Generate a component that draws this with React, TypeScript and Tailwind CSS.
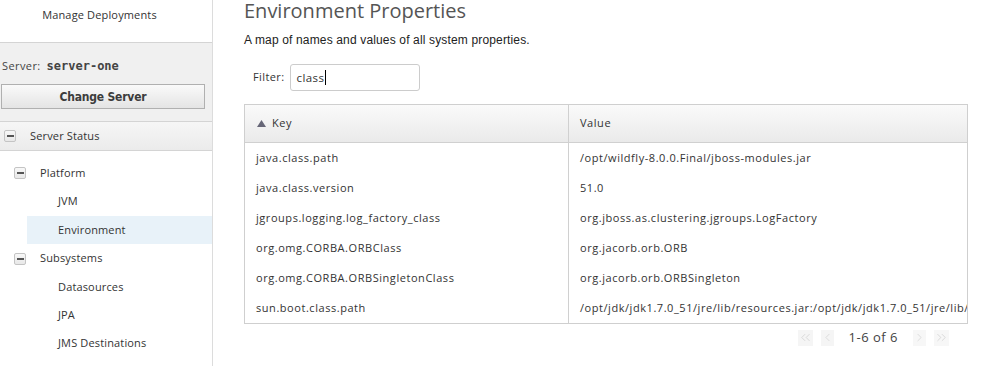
import React from 'react'
import { ChevronLeft, ChevronRight, ChevronsLeft, ChevronsRight } from 'lucide-react'

const rows = [
  ['java.class.path', '/opt/wildfly-8.0.0.Final/jboss-modules.jar'],
  ['java.class.version', '51.0'],
  ['jgroups.logging.log_factory_class', 'org.jboss.as.clustering.jgroups.LogFactory'],
  ['org.omg.CORBA.ORBClass', 'org.jacorb.orb.ORB'],
  ['org.omg.CORBA.ORBSingletonClass', 'org.jacorb.orb.ORBSingleton'],
  ['sun.boot.class.path', '/opt/jdk/jdk1.7.0_51/jre/lib/resources.jar:/opt/jdk/jdk1.7.0_51/jre/lib/rt.jar'],
]

const Minus = () => (
  <span className="flex h-[12px] w-[12px] items-center justify-center rounded-[2px] border border-[#c4c4c4] bg-gradient-to-b from-[#f8f8f8] to-[#e8e8e8]">
    <span className="block h-[2px] w-[7px] bg-[#555]" />
  </span>
)

const App = () => {
  return (
    <div className="flex h-[366px] w-[989px] overflow-hidden bg-white text-[11px] text-[#333]" style={{ fontFamily: '"Open Sans", "DejaVu Sans", sans-serif' }}>
      {/* sidebar */}
      <div className="flex w-[213px] shrink-0 flex-col border-r border-[#dcdcdc] tracking-[0.15px]">
        <div className="flex h-[43px] items-center justify-center border-b border-[#d4d4d4] pb-[11px] pr-[13px]">
          Manage Deployments
        </div>
        <div className="flex h-[79px] flex-col border-b border-[#d4d4d4] bg-[#f0f0f0]">
          <div className="mt-[14px] flex items-baseline pl-[2px] text-[#444]">
            <span className="tracking-[0.4px]">Server:</span>
            <span className="ml-[6px] text-[12px] font-bold tracking-normal" style={{ fontFamily: '"DejaVu Sans Mono", monospace' }}>server-one</span>
          </div>
          <button className="mx-[1px] mt-[9px] h-[25px] w-[204px] border border-[#b0b0b0] bg-gradient-to-b from-[#fafafa] to-[#e4e4e4] text-[12px] font-bold tracking-[-0.2px] text-[#3c3c3c]" style={{ fontFamily: '"DejaVu Sans Condensed", "DejaVu Sans", sans-serif', fontStretch: 'condensed' }}>
            Change Server
          </button>
        </div>
        <div className="flex h-[29px] items-center gap-[14px] border-b border-[#d4d4d4] bg-gradient-to-b from-[#f6f6f6] to-[#ebebeb] pl-[4px]">
          <Minus />
          <span>Server Status</span>
        </div>
        <div className="flex flex-col pt-[8px]">
          <div className="flex h-[28px] items-center gap-[14px] pl-[14px]">
            <Minus />
            <span>Platform</span>
          </div>
          <div className="flex h-[28px] items-center pl-[58px]">JVM</div>
          <div className="ml-[27px] mt-[1px] flex h-[28px] items-center bg-[#e8f2f9] pl-[31px]">Environment</div>
          <div className="flex h-[29px] items-center gap-[14px] pl-[14px]">
            <Minus />
            <span>Subsystems</span>
          </div>
          <div className="flex h-[28px] items-center pl-[58px]">Datasources</div>
          <div className="flex h-[28px] items-center pl-[58px]">JPA</div>
          <div className="flex h-[28px] items-center pl-[58px]">JMS Destinations</div>
        </div>
      </div>

      {/* content */}
      <div className="flex min-w-0 flex-1 flex-col pl-[31px] pr-[22px]">
        <h1 className="mt-[-3px] text-[20px] leading-[28px] text-[#555]">Environment Properties</h1>
        <p className="mt-[6px] text-[12px] tracking-[0.15px] text-[#222]" style={{ fontFamily: '"Liberation Sans", Arial, sans-serif' }}>
          A map of names and values of all system properties.
        </p>
        <div className="mt-[15px] flex items-center gap-[5px] pl-[9px] tracking-[0.4px]">
          <span>Filter:</span>
          <div className="flex h-[27px] w-[130px] items-center rounded-[3px] border border-[#ccc] pl-[6px] text-[11.5px]">
            class<span className="ml-[1px] inline-block h-[15px] w-[1px] bg-black" />
          </div>
        </div>
        <div className="mt-[13px] w-[724px] border border-[#cfcfcf] tracking-[0.55px]">
          <div className="flex h-[38px] border-b border-[#d0d0d0] bg-gradient-to-b from-[#fafafa] to-[#eaeaea]">
            <div className="flex w-[324px] items-center gap-[6px] border-r border-[#d0d0d0] pl-[12px]">
              <svg width="9" height="7" viewBox="0 0 9 7"><path d="M4.5 0L9 7H0z" fill="#667" /></svg>
              <span>Key</span>
            </div>
            <div className="flex flex-1 items-center pl-[11px]">Value</div>
          </div>
          {rows.map(([k, v]) => (
            <div key={k} className="flex h-[30px]">
              <div className="flex w-[324px] items-center border-r border-[#d0d0d0] pl-[11px]">{k}</div>
              <div className="flex min-w-0 flex-1 items-center overflow-hidden whitespace-nowrap pl-[11px]">{v}</div>
            </div>
          ))}
        </div>
        <div className="mt-[4px] flex w-[724px] items-center justify-end pr-[19px]">
          <span className="flex h-[16px] w-[15px] items-center justify-center bg-[#f5f5f5] text-[#c8c8c8]">
            <ChevronsLeft size={15} strokeWidth={1} />
          </span>
          <span className="ml-[8px] flex h-[16px] w-[13px] items-center justify-center bg-[#f5f5f5] text-[#c8c8c8]">
            <ChevronLeft size={15} strokeWidth={1} />
          </span>
          <span className="mx-[15px] text-[13px] tracking-[0.5px] text-[#444]">1-6 of 6</span>
          <span className="flex h-[16px] w-[13px] items-center justify-center bg-[#f7f7f7] text-[#c8c8c8]">
            <ChevronRight size={15} strokeWidth={1} />
          </span>
          <span className="ml-[8px] flex h-[16px] w-[15px] items-center justify-center bg-[#f7f7f7] text-[#c8c8c8]">
            <ChevronsRight size={15} strokeWidth={1} />
          </span>
        </div>
      </div>
    </div>
  )
}

export default App
